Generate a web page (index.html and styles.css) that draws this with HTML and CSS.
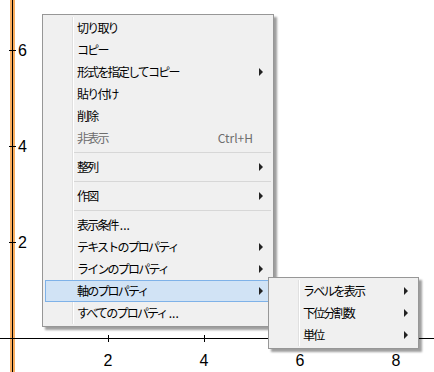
FILE: index.html
```html
<!DOCTYPE html>
<html lang="ja">
<head>
  <meta charset="UTF-8" />
  <title>Graph context menu</title>
  <link rel="stylesheet" href="styles.css">
</head>
<body>
  <!-- Plot area -->
  <div class="plot">
    <svg class="axes" width="434" height="372" viewBox="0 0 434 372">
      <rect x="10" y="0" width="5" height="372" fill="#f8ae60" />
      <line x1="12.5" y1="0" x2="12.5" y2="372" stroke="#000" />
      <line x1="0" y1="338.5" x2="434" y2="338.5" stroke="#000" />
      <g stroke="#000">
        <line x1="9" y1="50.5" x2="16" y2="50.5" />
        <line x1="9" y1="146.5" x2="16" y2="146.5" />
        <line x1="9" y1="242.5" x2="16" y2="242.5" />
        <line x1="108.5" y1="335" x2="108.5" y2="342" />
        <line x1="204.5" y1="335" x2="204.5" y2="342" />
        <line x1="300.5" y1="335" x2="300.5" y2="342" />
        <line x1="396.5" y1="335" x2="396.5" y2="342" />
      </g>
      <g class="tick-label">
        <text x="18" y="56">6</text>
        <text x="18" y="152">4</text>
        <text x="18" y="248">2</text>
        <text x="108" y="366" text-anchor="middle">2</text>
        <text x="204" y="366" text-anchor="middle">4</text>
        <text x="300" y="366" text-anchor="middle">6</text>
        <text x="396" y="366" text-anchor="middle">8</text>
      </g>
    </svg>
  </div>

  <!-- Context menu -->
  <div class="menu main-menu">
    <div class="item">切り取り</div>
    <div class="item">コピー</div>
    <div class="item">形式を指定してコピー<span class="arrow"></span></div>
    <div class="item">貼り付け</div>
    <div class="item">削除</div>
    <div class="item disabled">非表示<span class="shortcut">Ctrl+H</span></div>
    <div class="separator"></div>
    <div class="item">整列<span class="arrow"></span></div>
    <div class="separator"></div>
    <div class="item">作図<span class="arrow"></span></div>
    <div class="separator"></div>
    <div class="item">表示条件<span class="dots">...</span></div>
    <div class="item">テキストのプロパティ<span class="arrow"></span></div>
    <div class="item">ラインのプロパティ<span class="arrow"></span></div>
    <div class="item active">軸のプロパティ<span class="arrow"></span></div>
    <div class="item">すべてのプロパティ<span class="dots">...</span></div>
  </div>

  <div class="menu sub-menu">
    <div class="item">ラベルを表示<span class="arrow"></span></div>
    <div class="item">下位分割数<span class="arrow"></span></div>
    <div class="item">単位<span class="arrow"></span></div>
  </div>
</body>
</html>
```

FILE: styles.css
```css
* { box-sizing: border-box; }

body {
  margin: 0;
  width: 434px;
  height: 372px;
  overflow: hidden;
  background: #fff;
  font-family: "Noto Sans CJK JP", "Noto Sans", sans-serif;
  position: relative;
}

.plot {
  width: 434px;
  height: 372px;
}

.axes {
  display: block;
}

.tick-label {
  font-family: "Liberation Sans", Arial, sans-serif;
  font-size: 16px;
  fill: #000;
}

.menu {
  position: absolute;
  background: #f0f0f0;
  border: 1px solid #979797;
  padding: 2px;
  box-shadow: 3px 3px 2px rgba(0, 0, 0, 0.38);
  font-size: 12px;
  letter-spacing: -1.8px;
  color: #000;
}

.menu::before {
  content: "";
  position: absolute;
  left: 29px;
  top: 2px;
  bottom: 2px;
  width: 1px;
  background: #e0e0e0;
  box-shadow: 1px 0 0 #fff;
}

.main-menu {
  left: 42px;
  top: 14px;
  width: 232px;
}

.sub-menu {
  left: 268px;
  top: 277px;
  width: 151px;
}

.item {
  position: relative;
  height: 22px;
  display: flex;
  align-items: center;
  padding-left: 32px;
  padding-right: 8px;
  line-height: 1;
  white-space: nowrap;
}

.item.disabled {
  color: #6d6d6d;
}

.item.active {
  background: #d1e3f5;
  border: 1px solid #7fb2e8;
  padding-left: 31px;
  padding-right: 7px;
}

.dots {
  letter-spacing: 0;
  margin-left: 2px;
}

.shortcut {
  margin-left: auto;
  margin-right: 10px;
  letter-spacing: 0;
}

.arrow {
  margin-left: auto;
  width: 0;
  height: 0;
  border-top: 4px solid transparent;
  border-bottom: 4px solid transparent;
  border-left: 4px solid #222;
}

.separator {
  height: 7px;
  display: flex;
  align-items: center;
  margin-left: 28px;
}

.separator::after {
  content: "";
  flex: 1;
  height: 1px;
  background: #d7d7d7;
}
```
